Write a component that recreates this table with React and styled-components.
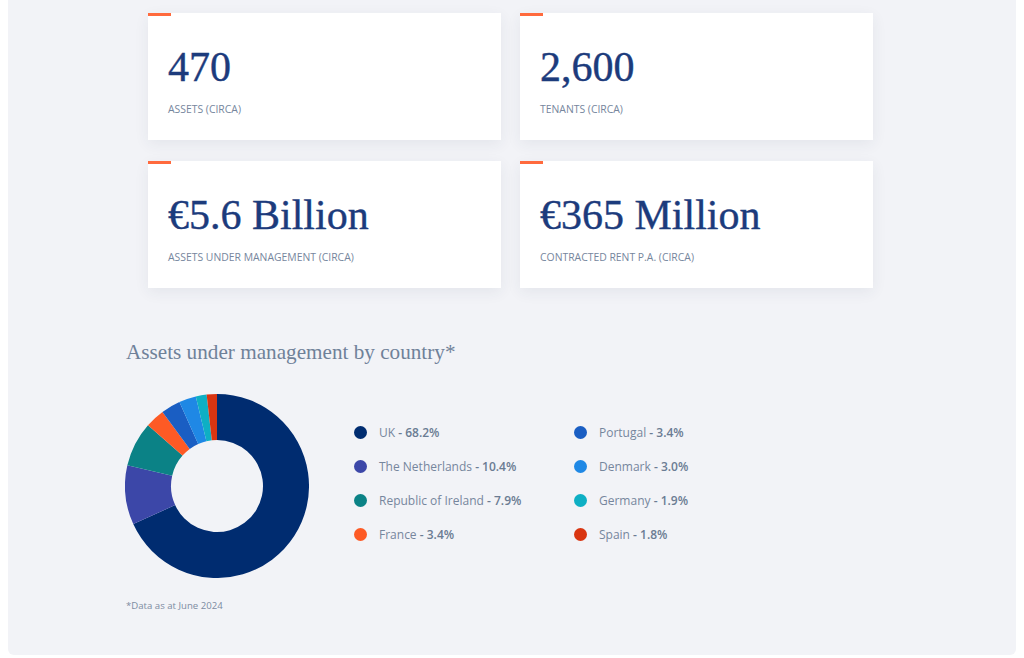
import React from 'react'
import styled, { createGlobalStyle } from 'styled-components'

const Global = createGlobalStyle`
  html, body {
    margin: 0;
    background: #ffffff;
  }
  body {
    font-family: "Open Sans", "Liberation Sans", sans-serif;
  }
`

const Panel = styled.div`
  margin: 0 8px;
  height: 655px;
  box-sizing: border-box;
  background: #f2f3f7;
  border-radius: 0 0 6px 6px;
  padding: 13px 0 0 118px;
  overflow: hidden;
`

const CardGrid = styled.div`
  display: grid;
  grid-template-columns: 353px 353px;
  column-gap: 19px;
  row-gap: 21px;
  margin-left: 22px;
`

const Card = styled.div`
  position: relative;
  background: #ffffff;
  height: 127px;
  box-sizing: border-box;
  padding: 29px 20px 0;
  box-shadow: 0 4px 14px rgba(40, 55, 90, 0.07);

  &::before {
    content: '';
    position: absolute;
    left: 0;
    top: 0;
    width: 23px;
    height: 3px;
    background: #ff6a3d;
  }
`

const Figure = styled.div`
  font-family: "Liberation Serif", "DejaVu Serif", serif;
  font-size: 42px;
  line-height: 50px;
  color: #1c3b7c;
  -webkit-text-stroke: 0.4px #1c3b7c;
`

const Caption = styled.div`
  margin-top: 10px;
  font-size: 10.4px;
  line-height: 14px;
  text-transform: uppercase;
  color: #76869d;
`

const Heading = styled.h2`
  margin: 51px 0 0;
  font-family: "Liberation Serif", "DejaVu Serif", serif;
  font-weight: normal;
  font-size: 21.2px;
  line-height: 27px;
  color: #6f8199;
`

const ChartRow = styled.div`
  display: flex;
  align-items: center;
  gap: 45px;
  margin-top: 28px;
  margin-left: -1px;
`

const Legend = styled.ul`
  list-style: none;
  margin: 0;
  padding: 0;
  display: grid;
  grid-template-columns: 220px 220px;
  grid-auto-flow: column;
  grid-template-rows: repeat(4, 34px);
  margin-top: -6px;
`

const Item = styled.li`
  display: flex;
  align-items: center;
  gap: 12px;
  font-size: 12px;
  color: #76869d;

  b {
    font-weight: 600;
    color: #6b7c93;
  }
`

const Dot = styled.span`
  width: 13px;
  height: 13px;
  border-radius: 50%;
  background: ${p => p.color};
  flex-shrink: 0;
`

const Note = styled.p`
  margin: 21px 0 0;
  font-size: 9.6px;
  line-height: 14px;
  color: #7d8ca2;
`

const stats = [
  { value: '470', label: 'Assets (circa)' },
  { value: '2,600', label: 'Tenants (circa)' },
  { value: '€5.6 Billion', label: 'Assets under management (circa)' },
  { value: '€365 Million', label: 'Contracted rent p.a. (circa)' },
]

const countries = [
  { name: 'UK', pct: 68.2, color: '#002c70' },
  { name: 'The Netherlands', pct: 10.4, color: '#3c47a8' },
  { name: 'Republic of Ireland', pct: 7.9, color: '#0b8286' },
  { name: 'France', pct: 3.4, color: '#fd5a25' },
  { name: 'Portugal', pct: 3.4, color: '#1a5ec3' },
  { name: 'Denmark', pct: 3.0, color: '#1f88e5' },
  { name: 'Germany', pct: 1.9, color: '#0eafc4' },
  { name: 'Spain', pct: 1.8, color: '#d93511' },
]

const Donut = ({ data, size = 184, hole = 46 }) => {
  const r = size / 2
  const c = r
  let start = 0
  const pt = (rad, a) => [c + rad * Math.sin(a), c - rad * Math.cos(a)]
  return (
    <svg width={size} height={size} viewBox={`0 0 ${size} ${size}`}>
      {data.map(d => {
        const a0 = (start / 100) * Math.PI * 2
        start += d.pct
        const a1 = (start / 100) * Math.PI * 2
        const large = a1 - a0 > Math.PI ? 1 : 0
        const [x0, y0] = pt(r, a0)
        const [x1, y1] = pt(r, a1)
        const [x2, y2] = pt(hole, a1)
        const [x3, y3] = pt(hole, a0)
        const path = `M${x0} ${y0} A${r} ${r} 0 ${large} 1 ${x1} ${y1} L${x2} ${y2} A${hole} ${hole} 0 ${large} 0 ${x3} ${y3} Z`
        return <path key={d.name} d={path} fill={d.color} />
      })}
    </svg>
  )
}

const App = () => {
  return (
    <>
      <Global />
      <Panel>
        <CardGrid>
          {stats.map(s => (
            <Card key={s.label}>
              <Figure>{s.value}</Figure>
              <Caption>{s.label}</Caption>
            </Card>
          ))}
        </CardGrid>

        <Heading>Assets under management by country*</Heading>

        <ChartRow>
          <Donut data={countries} />
          <Legend>
            {countries.map(c => (
              <Item key={c.name}>
                <Dot color={c.color} />
                <span>
                  {c.name} <b>- {c.pct.toFixed(1)}%</b>
                </span>
              </Item>
            ))}
          </Legend>
        </ChartRow>

        <Note>*Data as at June 2024</Note>
      </Panel>
    </>
  )
}

export default App
